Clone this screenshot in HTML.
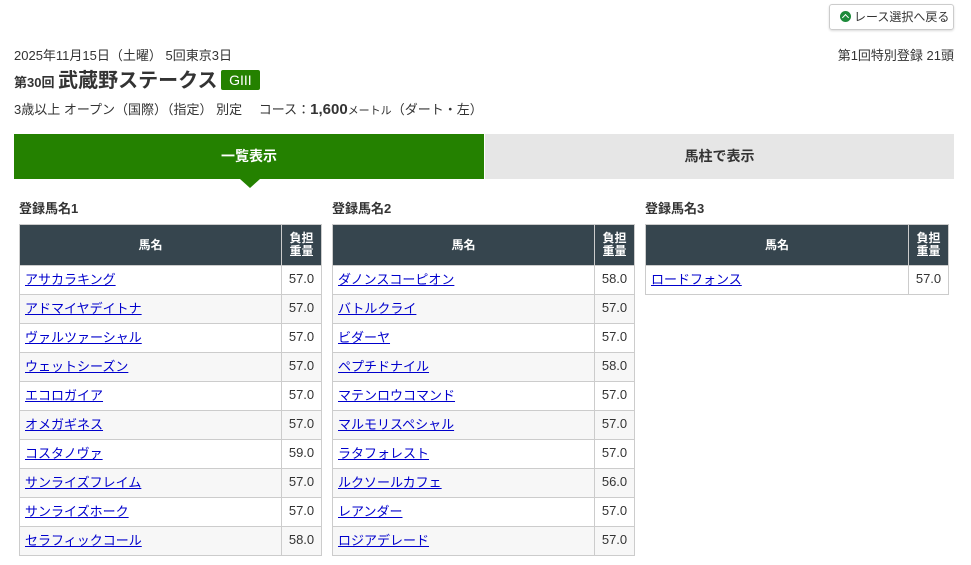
<!DOCTYPE html>
<html><head><meta charset="utf-8"><style>
*{margin:0;padding:0;box-sizing:border-box}
body{width:971px;height:565px;background:#fff;font-family:"Liberation Sans","Noto Sans CJK JP",sans-serif;color:#333;position:relative;overflow:hidden}
.a{position:absolute;white-space:nowrap}
.btn{left:829px;top:4px;width:125px;height:26px;border:1px solid #ccc;border-radius:3px;box-shadow:0 1px 2px rgba(0,0,0,.15);font-size:12px;line-height:24px;padding-left:10px;color:#333}
.btn i{display:inline-block;width:11px;height:11px;border-radius:50%;background:#1c8a3a;vertical-align:-1px;margin-right:3px;position:relative}
.btn i:after{content:"";position:absolute;left:3px;top:4px;width:4px;height:4px;border-left:1.5px solid #fff;border-top:1.5px solid #fff;transform:rotate(45deg)}
.tab{top:134px;height:45px;font-size:14px;font-weight:bold;text-align:center;line-height:45px}
table{position:absolute;top:224px;border-collapse:collapse;font-size:13px}
th{background:#36454e;color:#fff;font-size:12px;font-weight:bold;border:1px solid #ccc;height:41px;line-height:13px}
td{border:1px solid #ccc;height:29px;padding:0 5px 3px}
td.w{text-align:center;padding:0 0 3px}
tr:nth-child(odd) td{background:#f7f7f7}
a{color:#00c;text-decoration:underline}
.h{font-size:13px;font-weight:bold;top:198px}
</style></head><body>
<div class="a btn"><i></i>レース選択へ戻る</div>
<div class="a" style="left:14px;top:45px;font-size:13px">2025年11月15日（土曜） 5回東京3日</div>
<div class="a" style="right:17px;top:45px;font-size:13px">第1回特別登録 21頭</div>
<div class="a" style="left:14px;top:68px;font-size:13px;font-weight:bold;line-height:26px">第30回 <span style="font-size:20px">武蔵野ステークス</span> <span style="display:inline-block;background:#248100;color:#fff;font-size:14px;font-weight:normal;padding:0 8px;line-height:20px;border-radius:2px;vertical-align:2px">GIII</span></div>
<div class="a" style="left:14px;top:99px;font-size:13px">3歳以上 オープン（国際）（指定） 別定 　コース：<b style="font-size:15px">1,600</b><span style="font-size:11px">メートル</span>（ダート・左）</div>
<div class="a tab" style="left:14px;width:470px;background:#248100;color:#fff">一覧表示</div>
<div class="a" style="left:240px;top:179px;width:0;height:0;border-left:10px solid transparent;border-right:10px solid transparent;border-top:9px solid #248100"></div>
<div class="a tab" style="left:485px;width:469px;background:#e6e6e6;color:#333">馬柱で表示</div>
<div class="a h" style="left:19px">登録馬名1</div>
<div class="a h" style="left:332px">登録馬名2</div>
<div class="a h" style="left:645px">登録馬名3</div>
<table style="left:19px;width:303px"><tr><th style="width:262px">馬名</th><th>負担<br>重量</th></tr>
<tr><td><a>アサカラキング</a></td><td class="w">57.0</td></tr>
<tr><td><a>アドマイヤデイトナ</a></td><td class="w">57.0</td></tr>
<tr><td><a>ヴァルツァーシャル</a></td><td class="w">57.0</td></tr>
<tr><td><a>ウェットシーズン</a></td><td class="w">57.0</td></tr>
<tr><td><a>エコロガイア</a></td><td class="w">57.0</td></tr>
<tr><td><a>オメガギネス</a></td><td class="w">57.0</td></tr>
<tr><td><a>コスタノヴァ</a></td><td class="w">59.0</td></tr>
<tr><td><a>サンライズフレイム</a></td><td class="w">57.0</td></tr>
<tr><td><a>サンライズホーク</a></td><td class="w">57.0</td></tr>
<tr><td><a>セラフィックコール</a></td><td class="w">58.0</td></tr></table>
<table style="left:332px;width:303px"><tr><th style="width:262px">馬名</th><th>負担<br>重量</th></tr>
<tr><td><a>ダノンスコーピオン</a></td><td class="w">58.0</td></tr>
<tr><td><a>バトルクライ</a></td><td class="w">57.0</td></tr>
<tr><td><a>ビダーヤ</a></td><td class="w">57.0</td></tr>
<tr><td><a>ペプチドナイル</a></td><td class="w">58.0</td></tr>
<tr><td><a>マテンロウコマンド</a></td><td class="w">57.0</td></tr>
<tr><td><a>マルモリスペシャル</a></td><td class="w">57.0</td></tr>
<tr><td><a>ラタフォレスト</a></td><td class="w">57.0</td></tr>
<tr><td><a>ルクソールカフェ</a></td><td class="w">56.0</td></tr>
<tr><td><a>レアンダー</a></td><td class="w">57.0</td></tr>
<tr><td><a>ロジアデレード</a></td><td class="w">57.0</td></tr></table>
<table style="left:645px;width:304px"><tr><th style="width:263px">馬名</th><th>負担<br>重量</th></tr>
<tr><td style="background:#fff"><a>ロードフォンス</a></td><td class="w" style="background:#fff">57.0</td></tr></table>
</body></html>
